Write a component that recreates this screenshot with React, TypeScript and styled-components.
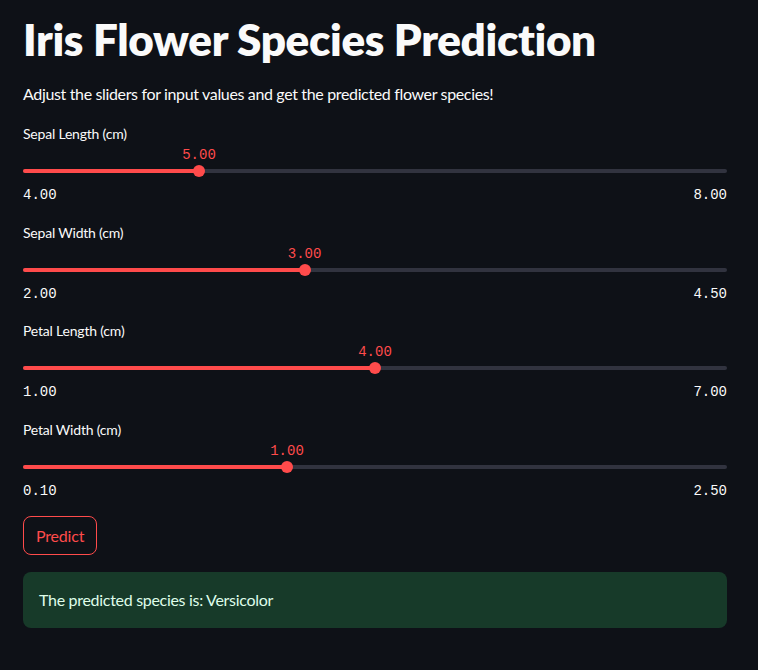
import React from "react";
import styled, { createGlobalStyle } from "styled-components";

const Global = createGlobalStyle`
  html, body { margin: 0; padding: 0; background: #0e1117; }
  body { font-family: "Source Sans Pro", Lato, "Noto Sans", sans-serif; color: #fafafa; }
`;

const Main = styled.main`
  width: 704px;
  margin-left: 23px;
  padding-top: 10px;
  display: flex;
  flex-direction: column;
`;

const Title = styled.h1`
  margin: 0;
  font-size: 44px;
  font-weight: 800;
  line-height: 58px;
  letter-spacing: -0.35px;
  color: #fafafa;
`;

const Lead = styled.p`
  margin: 14px 0 0;
  font-size: 16px;
  line-height: 24px;
  letter-spacing: -0.35px;
  color: #fafafa;
`;

const SliderBlock = styled.div<{ $first?: boolean }>`
  display: flex;
  flex-direction: column;
  margin-top: ${(p) => (p.$first ? "18px" : "17.5px")};
`;

const Label = styled.label`
  font-size: 14px;
  line-height: 20px;
  letter-spacing: -0.2px;
  color: #fafafa;
`;

const TrackArea = styled.div`
  position: relative;
  height: 12px;
  margin-top: 21px;
`;

const Track = styled.div`
  position: absolute;
  left: 0;
  right: 0;
  top: 4px;
  height: 4px;
  border-radius: 2px;
  background: #31333f;
`;

const Fill = styled.div`
  position: absolute;
  left: 0;
  top: 4px;
  height: 4px;
  border-radius: 2px;
  background: #ff4b4b;
`;

const Thumb = styled.div`
  position: absolute;
  top: 0;
  width: 12px;
  height: 12px;
  margin-left: -6px;
  border-radius: 50%;
  background: #ff4b4b;
`;

const ThumbValue = styled.div`
  position: absolute;
  bottom: 12px;
  transform: translateX(-50%);
  font-family: "Liberation Mono", "DejaVu Sans Mono", monospace;
  font-size: 14px;
  line-height: 20px;
  color: #ff4b4b;
  white-space: nowrap;
`;

const Ticks = styled.div`
  display: flex;
  justify-content: space-between;
  margin-top: 8px;
  font-family: "Liberation Mono", "DejaVu Sans Mono", monospace;
  font-size: 14px;
  line-height: 20px;
  color: #fafafa;
`;

const Button = styled.button`
  align-self: flex-start;
  margin-top: 15px;
  height: 39px;
  padding: 0 12px;
  background: #0e1117;
  border: 1px solid #ff4b4b;
  border-radius: 8px;
  color: #ff4b4b;
  font-family: inherit;
  font-size: 16px;
  letter-spacing: -0.2px;
  cursor: pointer;
`;

const Alert = styled.div`
  margin-top: 17px;
  padding: 16px;
  border-radius: 8px;
  background: #173a29;
  color: rgb(223, 253, 233);
  font-size: 16px;
  line-height: 24px;
  letter-spacing: -0.3px;
`;

type S = { label: string; min: number; max: number; value: number };

const sliders: S[] = [
  { label: "Sepal Length (cm)", min: 4, max: 8, value: 5 },
  { label: "Sepal Width (cm)", min: 2, max: 4.5, value: 3 },
  { label: "Petal Length (cm)", min: 1, max: 7, value: 4 },
  { label: "Petal Width (cm)", min: 0.1, max: 2.5, value: 1 },
];

function Slider({ s, first }: { s: S; first?: boolean }) {
  const pct = ((s.value - s.min) / (s.max - s.min)) * 100;
  return (
    <SliderBlock $first={first}>
      <Label>{s.label}</Label>
      <TrackArea>
        <Track />
        <Fill style={{ width: `${pct}%` }} />
        <Thumb style={{ left: `${pct}%` }} />
        <ThumbValue style={{ left: `${pct}%` }}>{s.value.toFixed(2)}</ThumbValue>
      </TrackArea>
      <Ticks>
        <span>{s.min.toFixed(2)}</span>
        <span>{s.max.toFixed(2)}</span>
      </Ticks>
    </SliderBlock>
  );
}

export default function App() {
  return (
    <>
      <Global />
      <Main>
        <Title>Iris Flower Species Prediction</Title>
        <Lead>Adjust the sliders for input values and get the predicted flower species!</Lead>
        {sliders.map((s, i) => (
          <Slider key={s.label} s={s} first={i === 0} />
        ))}
        <Button>Predict</Button>
        <Alert>The predicted species is: Versicolor</Alert>
      </Main>
    </>
  );
}
